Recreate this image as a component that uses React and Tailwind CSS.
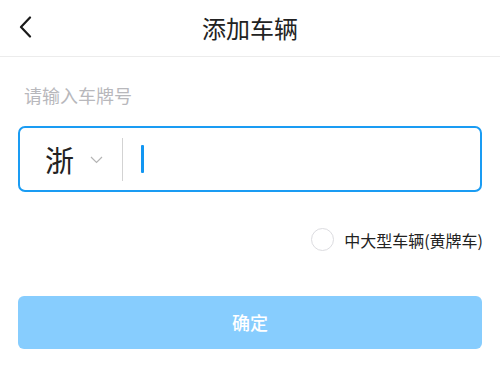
import React, { useState } from 'react';

const font = { fontFamily: '"Noto Sans CJK SC", "Noto Sans", sans-serif' };

const App = () => {
  const [big, setBig] = useState(false);

  return (
    <div className="w-[500px] h-[383px] bg-white text-[#222]" style={font}>
      {/* header */}
      <div className="relative h-[57px] flex items-center justify-center border-b border-[#ececec]">
        <button className="absolute left-[16px] top-[15px] w-[18px] h-[24px] flex items-center justify-center">
          <svg width="14" height="22" viewBox="0 0 14 22" fill="none">
            <path d="M12 1.5 L3 11 L12 20.5" stroke="#1a1a1a" strokeWidth="2.2" strokeLinecap="round" strokeLinejoin="round" />
          </svg>
        </button>
        <h1 className="text-[24px] leading-none font-normal -mt-[1px]">添加车辆</h1>
      </div>

      <div className="px-[18px]">
        <p className="pt-[26px] pl-[6px] text-[18px] leading-[24px] text-[#b8b8bc]">请输入车牌号</p>

        {/* plate input */}
        <div className="mt-[19px] h-[66px] flex items-center border-2 border-[#1a9cf3] rounded-[7px]">
          <div className="w-[102px] flex items-center pl-[25px]">
            <span className="text-[29px] leading-none text-[#222]">浙</span>
            <svg className="ml-[16px] mt-[2px]" width="13" height="8" viewBox="0 0 13 8" fill="none">
              <path d="M1 1 L6.5 6.5 L12 1" stroke="#b5b5b5" strokeWidth="1.2" />
            </svg>
          </div>
          <div className="w-px h-[43px] bg-[#d3d3d3]" />
          <div className="ml-[18px] w-[3px] h-[28px] bg-[#1296f2] rounded-[1px]" />
        </div>

        {/* vehicle type */}
        <div className="mt-[36px] flex justify-end items-center">
          <button
            onClick={() => setBig(!big)}
            className={`w-[23px] h-[23px] rounded-full border-[1.5px] ${big ? 'border-[#1a9cf3] bg-[#1a9cf3]' : 'border-[#dcdce0]'}`}
          />
          <span className="ml-[10px] mr-[-1px] text-[16px] leading-none text-[#222]">中大型车辆(黄牌车)</span>
        </div>

        <button className="mt-[45px] w-full h-[53px] rounded-[6px] bg-[#87cdfe] text-white text-[18px] font-medium">
          确定
        </button>
      </div>
    </div>
  );
};

export default App;
